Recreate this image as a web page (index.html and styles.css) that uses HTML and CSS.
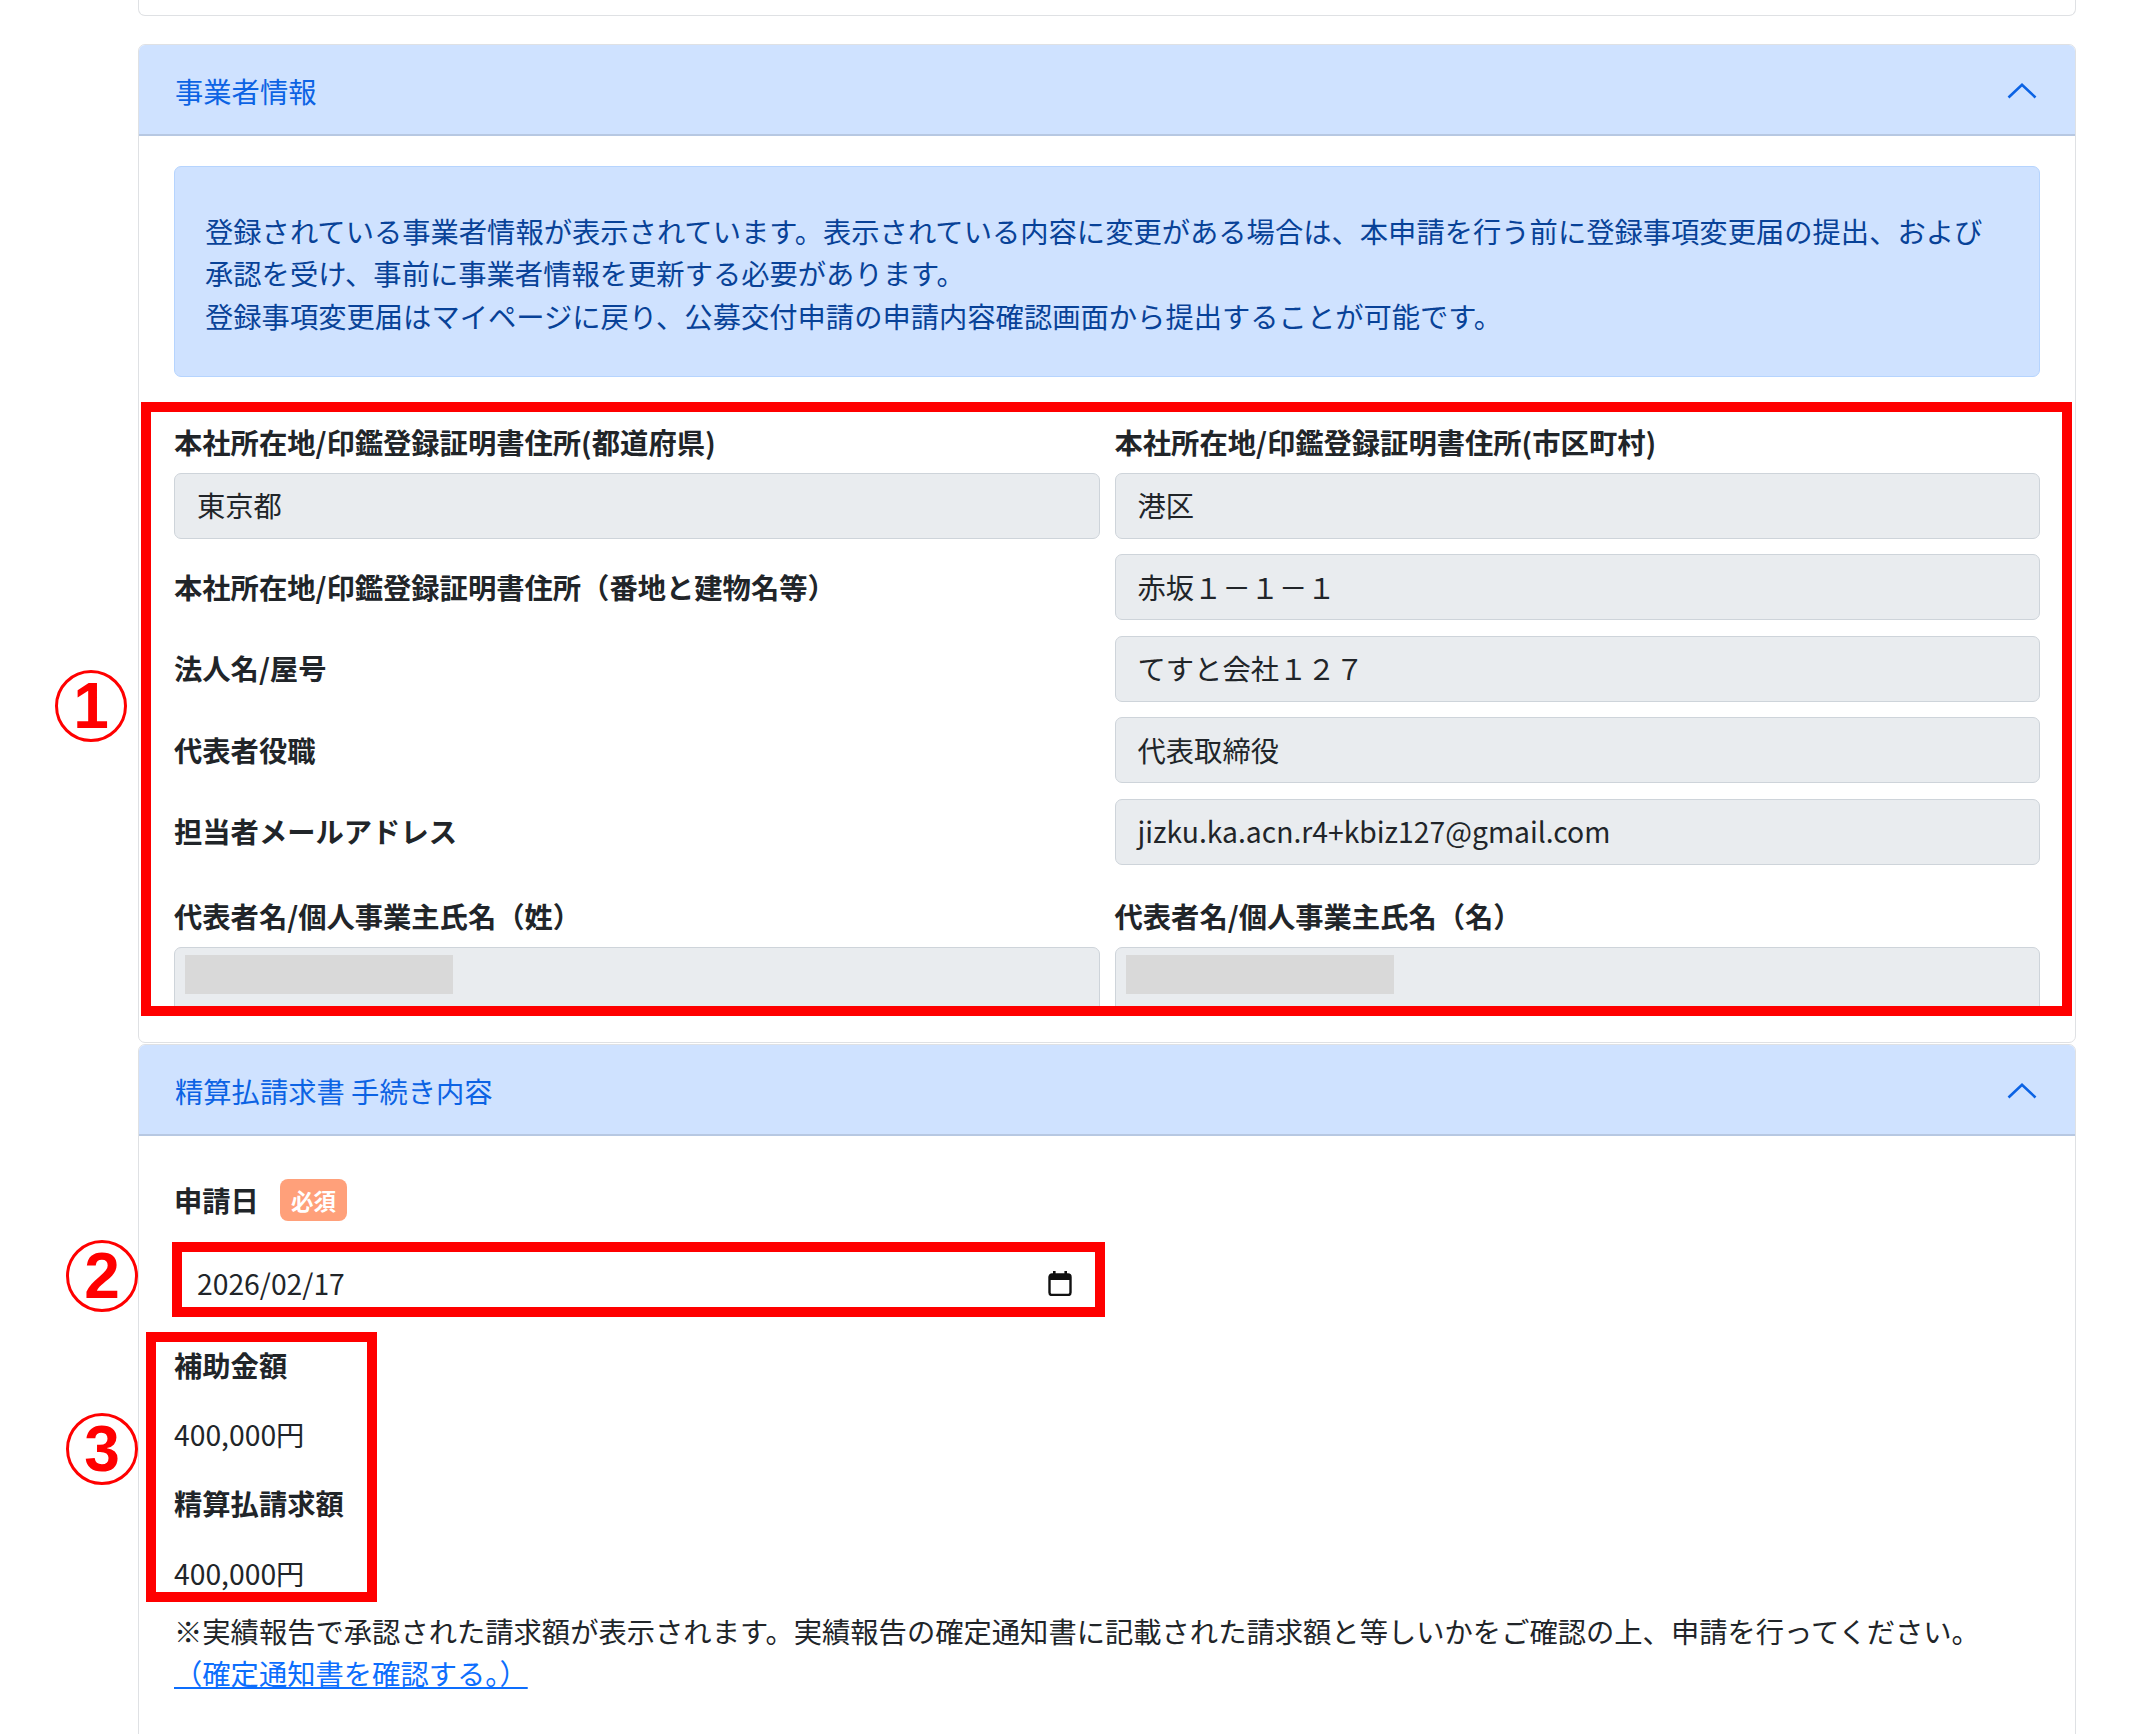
FILE: index.html
```html
<!DOCTYPE html>
<html lang="ja">
<head>
    <meta charset="UTF-8">
    <meta name="viewport" content="width=device-width, initial-scale=1.0">
    <title>精算払請求書 手続き内容</title>
    <link rel="stylesheet" href="styles.css">
</head>
<body>
    <div class="page">
        <div class="prevCard"></div>

        <!-- 事業者情報 -->
        <div class="card">
            <div class="cardHeader">
                <span>事業者情報</span>
                <svg class="chevron" width="30" height="16" viewBox="0 0 30 16"><path d="M1.5 14.5 L15 1.8 L28.5 14.5"/></svg>
            </div>
            <div class="cardBody bodyInfo">
                <div class="alertInfo">
                    登録されている事業者情報が表示されています。表示されている内容に変更がある場合は、本申請を行う前に登録事項変更届の提出、および<br>
                    承認を受け、事前に事業者情報を更新する必要があります。<br>
                    登録事項変更届はマイページに戻り、公募交付申請の申請内容確認画面から提出することが可能です。
                </div>

                <div class="annotated">
                    <div class="infoGrid">
                        <div class="field">
                            <div class="fieldLabel">本社所在地/印鑑登録証明書住所(都道府県)</div>
                            <div class="fieldInput">東京都</div>
                        </div>
                        <div class="field">
                            <div class="fieldLabel">本社所在地/印鑑登録証明書住所(市区町村)</div>
                            <div class="fieldInput">港区</div>
                        </div>

                        <div class="fieldLabel rowLabel">本社所在地/印鑑登録証明書住所（番地と建物名等）</div>
                        <div class="fieldInput">赤坂１－１－１</div>

                        <div class="fieldLabel rowLabel">法人名/屋号</div>
                        <div class="fieldInput">てすと会社１２７</div>

                        <div class="fieldLabel rowLabel">代表者役職</div>
                        <div class="fieldInput">代表取締役</div>

                        <div class="fieldLabel rowLabel">担当者メールアドレス</div>
                        <div class="fieldInput">jizku.ka.acn.r4+kbiz127@gmail.com</div>

                        <div class="field spaced">
                            <div class="fieldLabel">代表者名/個人事業主氏名（姓）</div>
                            <div class="fieldInput"><span class="masked"></span></div>
                        </div>
                        <div class="field spaced">
                            <div class="fieldLabel">代表者名/個人事業主氏名（名）</div>
                            <div class="fieldInput"><span class="masked"></span></div>
                        </div>
                    </div>
                    <div class="markBox markInfo"></div>
                    <div class="circleNum numInfo">1</div>
                </div>
            </div>
        </div>

        <!-- 精算払請求書 手続き内容 -->
        <div class="card cardNext">
            <div class="cardHeader">
                <span>精算払請求書 手続き内容</span>
                <svg class="chevron" width="30" height="16" viewBox="0 0 30 16"><path d="M1.5 14.5 L15 1.8 L28.5 14.5"/></svg>
            </div>
            <div class="cardBody bodyClaim">
                <div class="labelRow">
                    <span class="fieldLabel">申請日</span>
                    <span class="badge">必須</span>
                </div>

                <div class="dateWrap">
                    <div class="dateInput">
                        <span>2026/02/17</span>
                        <svg class="calIcon" width="24" height="25" viewBox="0 0 24 25">
                            <rect x="5" y="0" width="2.6" height="5" fill="#111"/>
                            <rect x="16.4" y="0" width="2.6" height="5" fill="#111"/>
                            <path d="M4 3.5h16a2.5 2.5 0 0 1 2.5 2.5v15.5a2.5 2.5 0 0 1-2.5 2.5H4a2.5 2.5 0 0 1-2.5-2.5V6A2.5 2.5 0 0 1 4 3.5z" fill="none" stroke="#111" stroke-width="2.4"/>
                            <rect x="1.5" y="3.5" width="21" height="5.5" fill="#111"/>
                        </svg>
                    </div>
                    <div class="markBox markDate"></div>
                    <div class="circleNum numDate">2</div>
                </div>

                <div class="amounts">
                    <div class="amountLabel">補助金額</div>
                    <div class="amountValue">400,000円</div>
                    <div class="amountLabel">精算払請求額</div>
                    <div class="amountValue last">400,000円</div>
                    <div class="markBox markAmount"></div>
                    <div class="circleNum numAmount">3</div>
                </div>

                <p class="note">
                    ※実績報告で承認された請求額が表示されます。実績報告の確定通知書に記載された請求額と等しいかをご確認の上、申請を行ってください。<br>
                    <a href="#" class="noteLink">（確定通知書を確認する。）</a>
                </p>
            </div>
        </div>
    </div>
</body>
</html>
```

FILE: styles.css
```css
body {
    margin: 0;
    background-color: #fff;
    font-family: "Noto Sans CJK JP", "Noto Sans", sans-serif;
    font-size: 28.3px;
    line-height: 1.5;
    color: #212529;
}
.page {
    padding: 0 54px 0 138px;
}
.prevCard {
    height: 15px;
    border: 1px solid #dfe1e4;
    border-top: none;
    border-radius: 0 0 7px 7px;
    margin-bottom: 28px;
}
.card {
    border: 1px solid #dfe1e4;
    border-radius: 7px;
    background-color: #fff;
}
.cardNext {
    margin-top: 1px;
}
.cardHeader {
    display: flex;
    justify-content: space-between;
    align-items: center;
    padding: 25px 38px 22px 36px;
    background-color: #cfe2ff;
    border-bottom: 2px solid #b7c8e2;
    border-radius: 6px 6px 0 0;
    color: #0c63e4;
}
.chevron path {
    fill: none;
    stroke: #0c63e4;
    stroke-width: 2.6;
}
.cardBody {
    padding: 29.5px 35px 28.5px 35px;
}
.bodyClaim {
    padding-top: 42.5px;
    padding-bottom: 60px;
}
.alertInfo {
    padding: 43px 30px 39px 30px;
    margin-bottom: 43.5px;
    background-color: #cfe2ff;
    border: 1px solid #b6d4fe;
    border-radius: 7px;
    color: #084298;
}

/* 注記用の赤枠と丸数字 */
.annotated {
    position: relative;
}
.markBox {
    position: absolute;
    box-sizing: border-box;
    border: 10px solid #ff0000;
    pointer-events: none;
}
.markInfo {
    top: -19px;
    left: -33px;
    right: -32px;
    bottom: -3px;
}
.markDate {
    top: -9px;
    left: -2px;
    right: -5px;
    bottom: 0;
}
.markAmount {
    top: -12px;
    left: -28px;
    width: 231px;
    bottom: -7.5px;
}
.circleNum {
    position: absolute;
    box-sizing: border-box;
    width: 72px;
    height: 72px;
    border: 3px solid #ff0000;
    border-radius: 50%;
    display: flex;
    align-items: center;
    justify-content: center;
    color: #ff0000;
    font-family: "Liberation Sans", Arial, sans-serif;
    font-weight: 700;
    font-size: 64px;
    line-height: 1;
}
.numInfo {
    top: 249px;
    left: -119px;
}
.numDate {
    top: -11px;
    left: -108px;
}
.numAmount {
    top: 69px;
    left: -108px;
}

/* 事業者情報 */
.infoGrid {
    display: grid;
    grid-template-columns: 1fr 1fr;
    column-gap: 15px;
    row-gap: 15.5px;
}
.fieldLabel {
    font-weight: 700;
    margin-bottom: 9.5px;
}
.rowLabel {
    align-self: center;
    margin-bottom: 0;
}
.spaced {
    margin-top: 15px;
}
.fieldInput {
    position: relative;
    box-sizing: border-box;
    height: 66px;
    display: flex;
    align-items: center;
    padding: 0 22px;
    background-color: #e9ecef;
    border: 1px solid #ced4da;
    border-radius: 7px;
    white-space: nowrap;
}
.masked {
    position: absolute;
    top: 7px;
    left: 10px;
    width: 268px;
    height: 39px;
    background-color: #d9d9d9;
}

/* 精算払請求書 */
.labelRow {
    display: flex;
    align-items: center;
    gap: 21px;
    height: 42.5px;
}
.labelRow .fieldLabel {
    margin-bottom: 0;
}
.badge {
    height: 42px;
    padding: 0 11px;
    border-radius: 8px;
    background-color: #ffa07a;
    color: #fff;
    font-weight: 700;
    font-size: 22.5px;
    line-height: 42px;
}
.dateWrap {
    position: relative;
    width: calc(50% - 7.5px);
    margin-top: 29.5px;
}
.dateInput {
    box-sizing: border-box;
    height: 66px;
    display: flex;
    align-items: center;
    justify-content: space-between;
    padding: 0 27px 0 22px;
    border: 1px solid #ced4da;
    border-radius: 7px;
    background-color: #fff;
}
.calIcon {
    display: block;
}
.amounts {
    position: relative;
    margin-top: 27px;
}
.amountLabel {
    font-weight: 700;
    margin-bottom: 27px;
}
.amountValue {
    margin-bottom: 27px;
}
.amountValue.last {
    margin-bottom: 0;
}
.note {
    margin: 15.5px 0 0 0;
}
.noteLink {
    color: #0d6efd;
    text-decoration: underline;
}
```
